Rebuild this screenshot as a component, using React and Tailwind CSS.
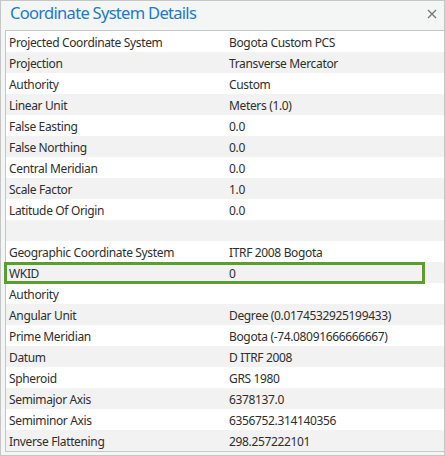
import React from 'react';

const rows = [
  ['Projected Coordinate System', 'Bogota Custom PCS'],
  ['Projection', 'Transverse Mercator'],
  ['Authority', 'Custom'],
  ['Linear Unit', 'Meters (1.0)'],
  ['False Easting', '0.0'],
  ['False Northing', '0.0'],
  ['Central Meridian', '0.0'],
  ['Scale Factor', '1.0'],
  ['Latitude Of Origin', '0.0'],
  ['', ''],
  ['Geographic Coordinate System', 'ITRF 2008 Bogota'],
  ['WKID', '0', true],
  ['Authority', ''],
  ['Angular Unit', 'Degree (0.0174532925199433)'],
  ['Prime Meridian', 'Bogota (-74.08091666666667)'],
  ['Datum', 'D ITRF 2008'],
  ['Spheroid', 'GRS 1980'],
  ['Semimajor Axis', '6378137.0'],
  ['Semiminor Axis', '6356752.314140356'],
  ['Inverse Flattening', '298.257222101'],
];

export default function App() {
  return (
    <div className="w-[445px] h-[456px] bg-[#f4f5f5] border border-[#c6c6c6] flex flex-col" style={{ fontFamily: '"Noto Sans", sans-serif' }}>
      {/* Title bar */}
      <div className="h-[29px] flex items-center justify-between pl-[9px] pr-[7px] pb-[4px] shrink-0">
        <h2 className="text-[16.5px] tracking-[-0.7px] text-[#1c7ac7] leading-none">Coordinate System Details</h2>
        <svg width="10" height="10" viewBox="0 0 10 10" className="text-[#767676]">
          <path d="M1 1 L9 9 M9 1 L1 9" stroke="currentColor" strokeWidth="1.3" />
        </svg>
      </div>

      {/* Details table */}
      <div className="ml-[4px] border-l border-t border-b border-[#c6c6c6] bg-white relative">
        {rows.map(([label, value, highlight], i) => (
          <div
            key={i}
            className={`h-[21px] pt-[3px] flex items-center text-[12px] tracking-[-0.35px] text-[#2e2e2e] ${i % 2 === 1 ? 'bg-[#f2f2f2]' : 'bg-white'} ${highlight ? 'relative' : ''}`}
          >
            <div className="w-[223px] pl-[3px] whitespace-nowrap">{label}</div>
            <div className="whitespace-nowrap">{value}</div>
            {highlight && (
              <div className="absolute left-[-2px] top-0 w-[421px] h-[22px] border-[3px] border-[#5b9d2f] pointer-events-none" />
            )}
          </div>
        ))}
      </div>
    </div>
  );
}
